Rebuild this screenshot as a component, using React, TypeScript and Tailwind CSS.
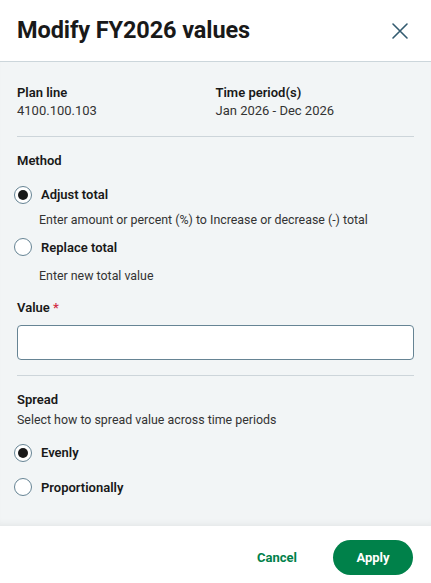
import React from "react";

function Radio({ checked, label }: { checked?: boolean; label: string }) {
  return (
    <label className="flex items-center gap-[9px]">
      <span className="flex h-[18px] w-[18px] items-center justify-center rounded-full border border-[#668494] bg-white">
        {checked && <span className="h-[10px] w-[10px] rounded-full bg-[#191919]" />}
      </span>
      <span className="text-[13px] font-semibold text-[#191919]">{label}</span>
    </label>
  );
}

export default function App() {
  return (
    <div className="flex h-[583px] w-[431px] flex-col bg-white text-[#191919]" style={{ fontFamily: "Roboto, 'Noto Sans', sans-serif" }}>
      {/* HEADER */}
      <div className="flex h-[62px] shrink-0 items-center justify-between border-b border-[#ccd6db] pl-[17px] pr-[22px]">
        <h1 className="text-[23.5px] font-bold tracking-[-0.1px]">Modify FY2026 values</h1>
        <svg width="18" height="18" viewBox="0 0 18 18" fill="none">
          <path d="M2 2L16 16M16 2L2 16" stroke="#335b70" strokeWidth="1.6" strokeLinecap="round" />
        </svg>
      </div>

      {/* BODY */}
      <div className="flex-1 bg-[#f2f5f6] px-[17px] pt-[22px] shadow-[inset_0_-6px_6px_-4px_rgba(0,0,0,0.06)]">
        <div className="grid grid-cols-2 pb-[16px]">
          <div>
            <div className="text-[13px] font-semibold leading-[18px]">Plan line</div>
            <div className="text-[13px] leading-[18px] text-[#333]">4100.100.103</div>
          </div>
          <div>
            <div className="text-[13px] font-semibold leading-[18px]">Time period(s)</div>
            <div className="text-[13px] leading-[18px] text-[#333]">Jan 2026 - Dec 2026</div>
          </div>
        </div>
        <div className="border-t border-[#cdd5da]" />

        <div className="pt-[15px] text-[13px] font-semibold leading-[18px]">Method</div>
        <div className="mt-[15px]">
          <div className="-ml-[3px]">
            <Radio checked label="Adjust total" />
          </div>
          <div className="mt-[6px] pl-[22px] text-[12.4px] leading-[18px] text-[#333]">
            Enter amount or percent (%) to Increase or decrease (-) total
          </div>
          <div className="-ml-[3px] mt-[9px]">
            <Radio label="Replace total" />
          </div>
          <div className="mt-[10px] pl-[22px] text-[12.4px] leading-[18px] text-[#333]">Enter new total value</div>
        </div>

        <div className="mt-[14px] text-[13px] font-semibold leading-[18px]">
          Value <span className="text-[#d32f47]">*</span>
        </div>
        <input className="mt-[8px] h-[35px] w-full rounded-[4px] border border-[#668494] bg-white px-3 text-[13px] outline-none" />
        <div className="mt-[15px] border-t border-[#cdd5da]" />

        <div className="pt-[15px] text-[13px] font-semibold leading-[18px]">Spread</div>
        <div className="mt-[2px] text-[12.4px] leading-[18px] text-[#333]">Select how to spread value across time periods</div>
        <div className="-ml-[3px] mt-[14px]">
          <Radio checked label="Evenly" />
        </div>
        <div className="-ml-[3px] mt-[15px]">
          <Radio label="Proportionally" />
        </div>
      </div>

      {/* FOOTER */}
      <div className="flex h-[57px] shrink-0 items-start justify-end gap-[18px] pr-[18px] pt-[14px]">
        <button className="h-[35px] px-[18px] text-[13px] font-bold text-[#00814a]">Cancel</button>
        <button className="h-[35px] w-[80px] rounded-full bg-[#00814a] text-[13px] font-bold text-white">Apply</button>
      </div>
    </div>
  );
}
